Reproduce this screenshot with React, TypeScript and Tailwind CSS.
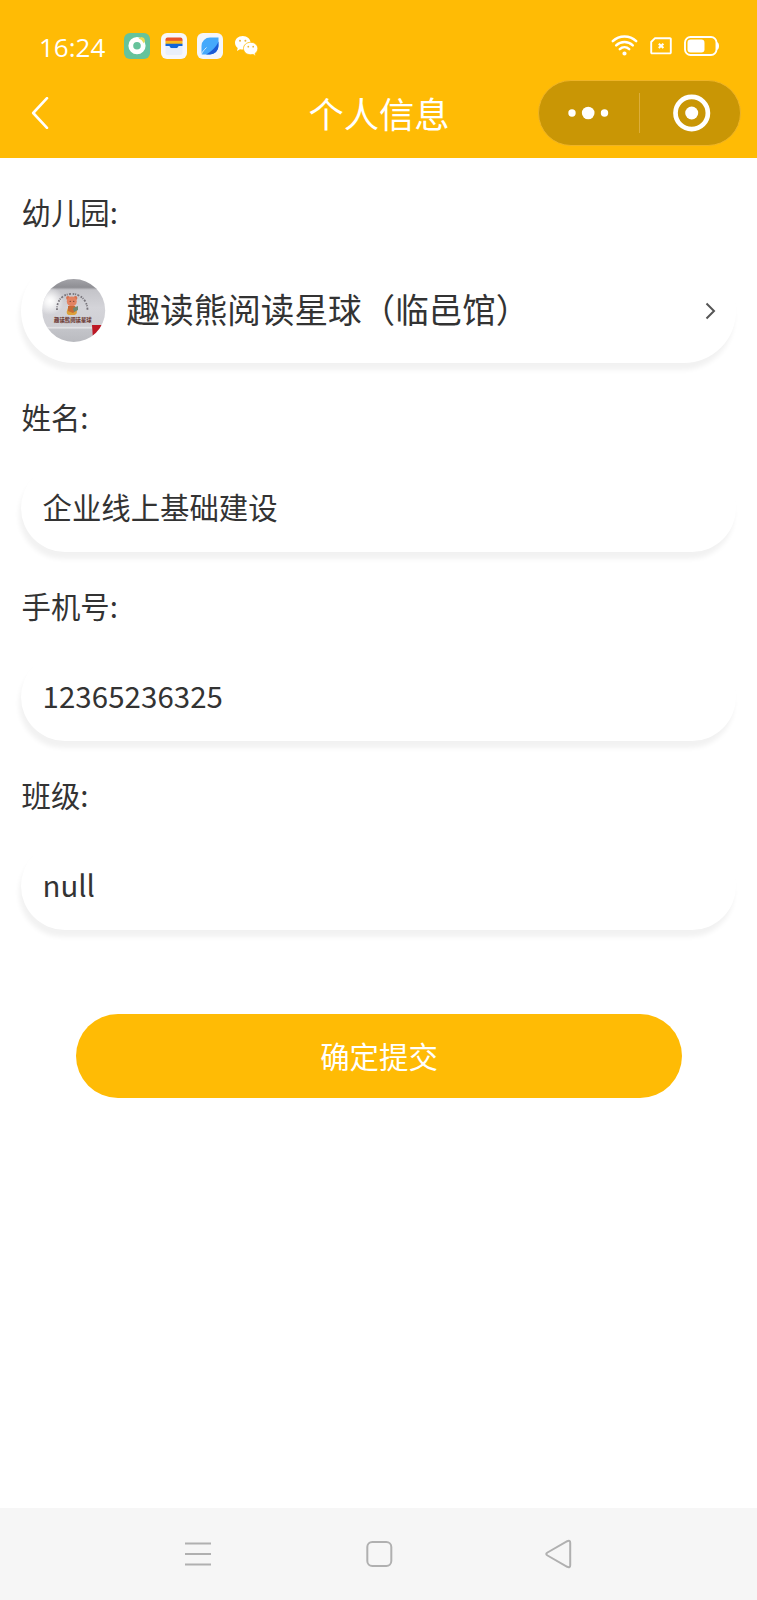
import React from "react";

function MusicAppIcon() {
  return (
    <svg width="26" height="26" viewBox="0 0 26 26">
      <rect width="26" height="26" rx="6" fill="#66c39b" />
      <circle cx="13" cy="12.7" r="6.2" fill="none" stroke="#fff" strokeWidth="4.8" />
      <path d="M14.5 5.5l3-1.5 2.5 1 1 2.5-1 3-2.500-3.500z" fill="#e9dc57" />
    </svg>
  );
}

function WalletAppIcon() {
  return (
    <svg width="26" height="26" viewBox="0 0 26 26">
      <rect width="26" height="26" rx="6" fill="#f7f7fb" />
      <path d="M4.500 6.500a2 2 0 0 1 2-2h13a2 2 0 0 1 2 2v1.800h-17z" fill="#e9532a" />
      <path d="M4.500 7.800h17v3.200h-17z" fill="#fbb91f" />
      <path d="M4.500 10.700h17v2.300h-3.200c-1 0-1.400 2.300-3 2.300h-4.600c-1.600 0-2-2.300-3-2.300H4.500z" fill="#1265d8" />
      <path d="M4.500 13h3.200c1 0 1.400 2.300 3 2.300h4.600c1.600 0 2-2.300 3-2.300h3.200v7a2 2 0 0 1-2 2h-13a2 2 0 0 1-2-2z" fill="#e9effb" />
    </svg>
  );
}

function BrowserAppIcon() {
  return (
    <svg width="26" height="26" viewBox="0 0 26 26">
      <rect width="26" height="26" rx="6" fill="#f4f6fb" />
      <path d="M4.500 21.500V13A8.500 8.500 0 0 1 13 4.500h8.500V13A8.500 8.500 0 0 1 13 21.500z" fill="#45a9fb" />
      <path d="M21.500 8.500V13A8.500 8.500 0 0 1 13 21.500H9C14 19 19 14.500 21.500 8.500z" fill="#1b5ad6" />
      <path d="M4 22c1.500-3.500 3-5 5.500-7.500" stroke="#e4f2ff" strokeWidth="0.900" fill="none" />
    </svg>
  );
}

function WechatIcon() {
  return (
    <svg width="25" height="22" viewBox="0 0 25 22">
      <path d="M8.700 1C4.100 1 1 4 1 7.800c0 2.200 1.100 4 2.700 5.200L3 16l3-1.700c.9.200 1.800.3 2.700.3 4.500 0 7.900-3 7.900-6.800S13.200 1 8.700 1z" fill="#fff" />
      <path d="M16.700 7.300c-4.200 0-7.200 2.700-7.200 6.200s3 6.200 7.200 6.200c.8 0 1.600-.1 2.300-.3l2.700 1.500-.6-2.500c1.700-1.200 2.700-2.900 2.700-4.900 0-3.500-3-6.200-7.100-6.200z" fill="#fff" stroke="#ffbb05" strokeWidth="0.800" />
      <g fill="#e9b73a">
        <circle cx="6" cy="5.800" r="1" />
        <circle cx="11.400" cy="5.800" r="1" />
        <circle cx="14.300" cy="11.700" r="0.900" />
        <circle cx="19.200" cy="11.700" r="0.900" />
      </g>
    </svg>
  );
}

function WifiIcon() {
  return (
    <svg width="27" height="22" viewBox="0 0 27 22" fill="none" stroke="#fff" strokeWidth="2.500" strokeLinecap="round">
      <path d="M1.800 6.200C8.400-.1 18.600-.1 25.200 6.200" />
      <path d="M5.200 10.300c4.700-4.400 11.900-4.400 16.600 0" />
      <path d="M8.800 14.100c2.700-2.400 6.700-2.400 9.400 0" />
      <circle cx="13.500" cy="18.500" r="1.300" fill="#fff" strokeWidth="1.600" />
    </svg>
  );
}

function SimIcon() {
  return (
    <svg width="22" height="18" viewBox="0 0 22 18" fill="none" stroke="#fff">
      <path d="M4.800 1.300h15.200a.8.8 0 0 1 .8.8v13.500a.8.8 0 0 1-.8.8H2a.8.8 0 0 1-.8-.8V5z" strokeWidth="1.900" strokeLinejoin="round" />
      <path d="M8.800 6.700l4.600 4.400M13.400 6.700l-4.600 4.400" strokeWidth="2.100" />
    </svg>
  );
}

function BatteryIcon() {
  return (
    <svg width="36" height="20" viewBox="0 0 36 20">
      <rect x="1" y="1" width="31.500" height="18" rx="5.500" fill="none" stroke="#fff" strokeWidth="1.900" />
      <rect x="3.500" y="3.500" width="17" height="13" rx="3.200" fill="#fff" />
      <path d="M33 6c1.500.7 2 2.200 2 4s-.5 3.300-2 4z" fill="#fff" />
    </svg>
  );
}

function Avatar() {
  return (
    <svg width="64" height="64" viewBox="0 0 64 64" className="shrink-0">
      <defs>
        <clipPath id="round">
          <circle cx="31.700" cy="31.500" r="31.500" />
        </clipPath>
        <linearGradient id="wall" x1="0" y1="0" x2="0" y2="1">
          <stop offset="0" stopColor="#a3a3a8" />
          <stop offset="0.130" stopColor="#8f8f94" />
          <stop offset="0.170" stopColor="#c4c4c9" />
          <stop offset="0.450" stopColor="#d4d4d9" />
          <stop offset="0.740" stopColor="#cfcfd4" />
          <stop offset="0.760" stopColor="#e4e4e7" />
          <stop offset="0.790" stopColor="#c3c4c9" />
          <stop offset="1" stopColor="#b9babf" />
        </linearGradient>
        <radialGradient id="glow">
          <stop offset="0" stopColor="#fff" />
          <stop offset="0.300" stopColor="#fff" stopOpacity="0.800" />
          <stop offset="1" stopColor="#fff" stopOpacity="0" />
        </radialGradient>
      </defs>
      <g clipPath="url(#round)">
        <rect width="64" height="64" fill="url(#wall)" />
        <circle cx="8" cy="22" r="14" fill="url(#glow)" />
        <path d="M15 31C14 9.500 45 9.500 45.500 31" fill="none" stroke="#77747b" strokeWidth="1.800" strokeDasharray="1.600 0.900 1 1.300 2 1.700" />
        <path d="M26 29c-1.500 3-2 6 .5 7h6c3-1 3-4 1-7z" fill="#dca13b" />
        <circle cx="26" cy="19" r="1.900" fill="#d8714f" />
        <circle cx="33.500" cy="19" r="1.900" fill="#d8714f" />
        <ellipse cx="29.800" cy="22.500" rx="5" ry="4.900" fill="#e28362" />
        <path d="M26 27h7l2 4-4 3-5-2z" fill="#c76b35" />
        <path d="M31 29l5-2v4l-4 2z" fill="#6d8a74" />
        <circle cx="28.200" cy="22.300" r="0.600" fill="#5b3028" />
        <circle cx="31.800" cy="22.300" r="0.600" fill="#5b3028" />
        <text x="12" y="42.600" fontSize="5.400" fontWeight="900" fill="#70433d" fontFamily="Noto Sans CJK SC, sans-serif">趣读熊阅读星球</text>
        <path d="M50 46h14v14H51z" fill="#bd1825" />
      </g>
    </svg>
  );
}

function Label({ children }: { children: React.ReactNode }) {
  return <div className="flex h-[101px] items-center pl-[21.500px] pt-[7px] text-[29.400px]">{children}</div>;
}

function Field({ children }: { children: React.ReactNode }) {
  return (
    <div className="mx-[21px] flex h-[88px] items-center rounded-[44px] bg-white pb-[3px] pl-[21.500px] text-[29.400px] shadow-[-2px_7px_5px_rgba(0,0,0,0.055)]">
      {children}
    </div>
  );
}

export default function App() {
  return (
    <div className="flex h-[1600px] w-[757px] flex-col overflow-hidden bg-white font-['Noto_Sans_CJK_SC',sans-serif] leading-none font-[370] text-[#333]">
      <header className="h-[158px] shrink-0 bg-[#ffbb05] text-white">
        <div className="flex h-[80px] items-center justify-between pr-[37px] pl-[39px] pt-[12px]">
          <div className="flex items-center">
            <span className="w-[85px] pt-[2px] font-['Open_Sans',sans-serif] text-[26px] font-normal">16:24</span>
            <div className="flex items-center gap-[10.500px]">
              <MusicAppIcon />
              <WalletAppIcon />
              <BrowserAppIcon />
              <WechatIcon />
            </div>
          </div>
          <div className="flex items-center gap-[12px]">
            <WifiIcon />
            <SimIcon />
            <BatteryIcon />
          </div>
        </div>
        <div className="grid h-[65px] grid-cols-[1fr_auto_1fr] items-center px-[16px]">
          <svg width="18" height="32" viewBox="0 0 18 32" className="ml-[15px]" fill="none" stroke="#fff" strokeWidth="2.600" strokeLinecap="round" strokeLinejoin="round">
            <path d="M16 1.200L2.200 16 16 30.800" />
          </svg>
          <h1 className="pb-px pl-px text-[35.300px]">个人信息</h1>
          <div className="flex h-[66px] w-[203px] items-center justify-end justify-self-end rounded-full border border-[#efb425] bg-[#c99605]">
            <svg width="200" height="64" viewBox="0 0 200 64" fill="#fff">
              <circle cx="32" cy="32" r="3.700" />
              <circle cx="48.200" cy="32" r="6.300" />
              <circle cx="64.500" cy="32" r="3.700" />
              <rect x="99" y="12" width="1" height="40" fill="#dcae3a" />
              <circle cx="151.700" cy="32" r="16.200" fill="none" stroke="#fff" strokeWidth="4.700" />
              <circle cx="151.700" cy="32" r="6.500" />
            </svg>
          </div>
        </div>
      </header>

      <main className="flex-1">
        <Label>幼儿园:</Label>
        <div className="mx-[21px] flex h-[104px] items-center rounded-[52px] bg-white pr-[20px] pl-[21px] shadow-[-2px_7px_5px_rgba(0,0,0,0.055)]">
          <Avatar />
          <span className="ml-[20.500px] flex-1 pb-[4px] text-[33.600px]">趣读熊阅读星球（临邑馆）</span>
          <svg width="11" height="18" viewBox="0 0 11 18" fill="none" stroke="#555" strokeWidth="2">
            <path d="M1.500 1.500L9 9l-7.500 7.500" />
          </svg>
        </div>
        <Label>姓名:</Label>
        <Field>企业线上基础建设</Field>
        <Label>手机号:</Label>
        <Field>
          <span className="tracking-[0.100px]">12365236325</span>
        </Field>
        <Label>班级:</Label>
        <Field>null</Field>
        <button className="mx-auto mt-[84px] flex h-[84px] w-[606px] items-center justify-center rounded-full bg-[#ffbb05] pb-px pl-px text-[29.400px] text-white">
          确定提交
        </button>
      </main>

      <nav className="flex h-[92px] shrink-0 items-center justify-center bg-[#f6f6f6]">
        <svg width="390" height="32" viewBox="0 0 390 32" fill="none" stroke="#b0b0b0" strokeWidth="2">
          <path d="M1 5.500h26M1 16h26M1 26.500h26" />
          <rect x="183.300" y="4" width="24" height="24" rx="5" />
          <path d="M363.500 14.500l19.700-11.300q3-1.200 3 1.600v22.400q0 2.800-3 1.600L363.500 17.500q-2.500-1.500 0-3z" />
        </svg>
      </nav>
    </div>
  );
}
